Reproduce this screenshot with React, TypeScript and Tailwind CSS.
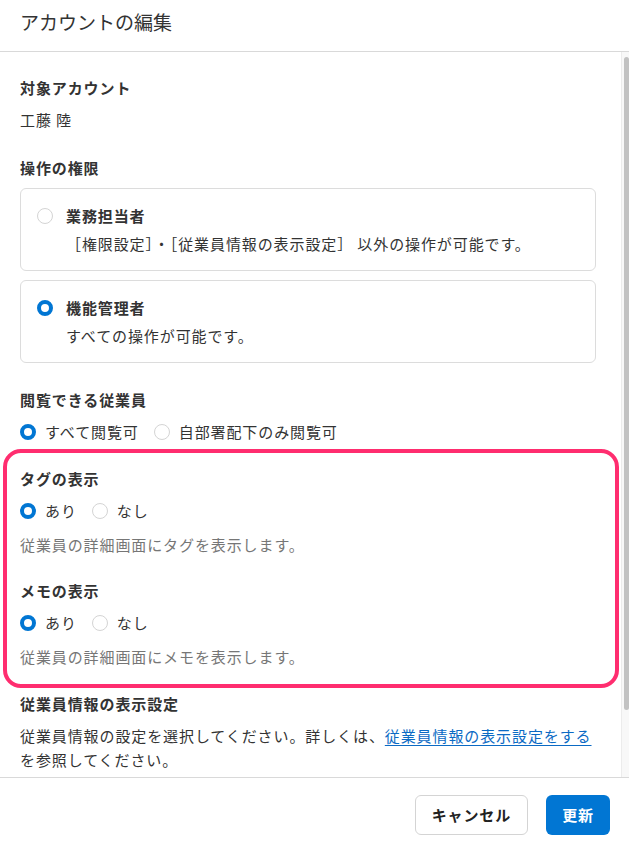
import { ReactNode } from "react";

function Radio({ checked }: { checked: boolean }) {
  return checked ? (
    <span className="inline-block w-4 h-4 rounded-full border-[4.5px] border-[#0176d3] bg-white shrink-0" />
  ) : (
    <span className="inline-block w-4 h-4 rounded-full border border-[#d4d4d4] bg-white shrink-0" />
  );
}

function Label({ children, className = "" }: { children: ReactNode; className?: string }) {
  return <p className={`font-bold leading-[22px] ${className}`}>{children}</p>;
}

function Choice({ checked, label }: { checked: boolean; label: string }) {
  return (
    <label className="flex items-center gap-[9px] leading-[22px]">
      <Radio checked={checked} />
      <span>{label}</span>
    </label>
  );
}

function RoleCard({ checked, title, desc }: { checked: boolean; title: string; desc: string }) {
  return (
    <div className="border border-[#dcdcdc] rounded-md pt-4 pb-[15px] pl-4 pr-4">
      <div className="flex items-center gap-[13px] leading-[22px]">
        <Radio checked={checked} />
        <span className="font-bold">{title}</span>
      </div>
      <p className="mt-[6px] pl-[29px] leading-[22px]">{desc}</p>
    </div>
  );
}

export default function App() {
  return (
    <div
      className="w-[629px] h-[846px] bg-white flex flex-col text-[15px] tracking-[0.9px] text-[#333] overflow-hidden"
      style={{ fontFamily: '"Noto Sans CJK JP", "Noto Sans", sans-serif' }}
    >
      {/* ヘッダー */}
      <header className="h-[52px] shrink-0 border-b border-[#d9d9d9] flex items-center px-5 pb-[7px] text-[19px] tracking-normal">
        アカウントの編集
      </header>

      {/* 本文 + スクロールバー */}
      <div className="flex-1 flex min-h-0">
        <div className="flex-1 pl-5 pr-[25px] pt-[25px]">
          <Label>対象アカウント</Label>
          <p className="mt-[10px] leading-[22px]">工藤 陸</p>

          <Label className="mt-[26px]">操作の権限</Label>
          <div className="mt-[9px] flex flex-col gap-[9px]">
            <RoleCard
              checked={false}
              title="業務担当者"
              desc="［権限設定］・［従業員情報の表示設定］ 以外の操作が可能です。"
            />
            <RoleCard checked title="機能管理者" desc="すべての操作が可能です。" />
          </div>

          <Label className="mt-[26px]">閲覧できる従業員</Label>
          <div className="mt-[10px] flex items-center gap-[15px]">
            <Choice checked label="すべて閲覧可" />
            <Choice checked={false} label="自部署配下のみ閲覧可" />
          </div>

          {/* 強調枠 */}
          <div className="mt-[6px] -ml-[17px] -mr-[23px] border-4 border-[#ff2d6f] rounded-[18px] pl-[13px] pr-4 pt-[15px] pb-4">
            <Label>タグの表示</Label>
            <div className="mt-[10px] flex items-center gap-[15px]">
              <Choice checked label="あり" />
              <Choice checked={false} label="なし" />
            </div>
            <p className="mt-3 leading-[22px] text-[#767676]">従業員の詳細画面にタグを表示します。</p>

            <Label className="mt-6">メモの表示</Label>
            <div className="mt-[10px] flex items-center gap-[15px]">
              <Choice checked label="あり" />
              <Choice checked={false} label="なし" />
            </div>
            <p className="mt-3 leading-[22px] text-[#767676]">従業員の詳細画面にメモを表示します。</p>
          </div>

          <Label className="mt-[5px]">従業員情報の表示設定</Label>
          <p className="mt-[9px] leading-[24px]">
            従業員情報の設定を選択してください。詳しくは、
            <a className="text-[#0b6ac4] underline underline-offset-[3px]">従業員情報の表示設定をする</a>
            <br />
            を参照してください。
          </p>
        </div>

        {/* スクロールバー */}
        <div className="w-2 shrink-0 border-l border-[#ececec] bg-[#f8f8f8] pt-[5px] pl-[2px]">
          <div className="w-[5px] h-[653px] rounded-full bg-[#c2c2c2]" />
        </div>
      </div>

      {/* フッター */}
      <footer className="h-[69px] shrink-0 border-t border-[#d9d9d9] flex justify-end items-start gap-[18px] pt-[17px] pr-[19px]">
        <button className="h-10 px-4 border border-[#d4d4d4] rounded-md bg-white font-bold text-[15px] text-[#222]">
          キャンセル
        </button>
        <button className="h-10 px-4 rounded-md bg-[#0176d3] text-white font-bold text-[15px]">
          更新
        </button>
      </footer>
    </div>
  );
}
